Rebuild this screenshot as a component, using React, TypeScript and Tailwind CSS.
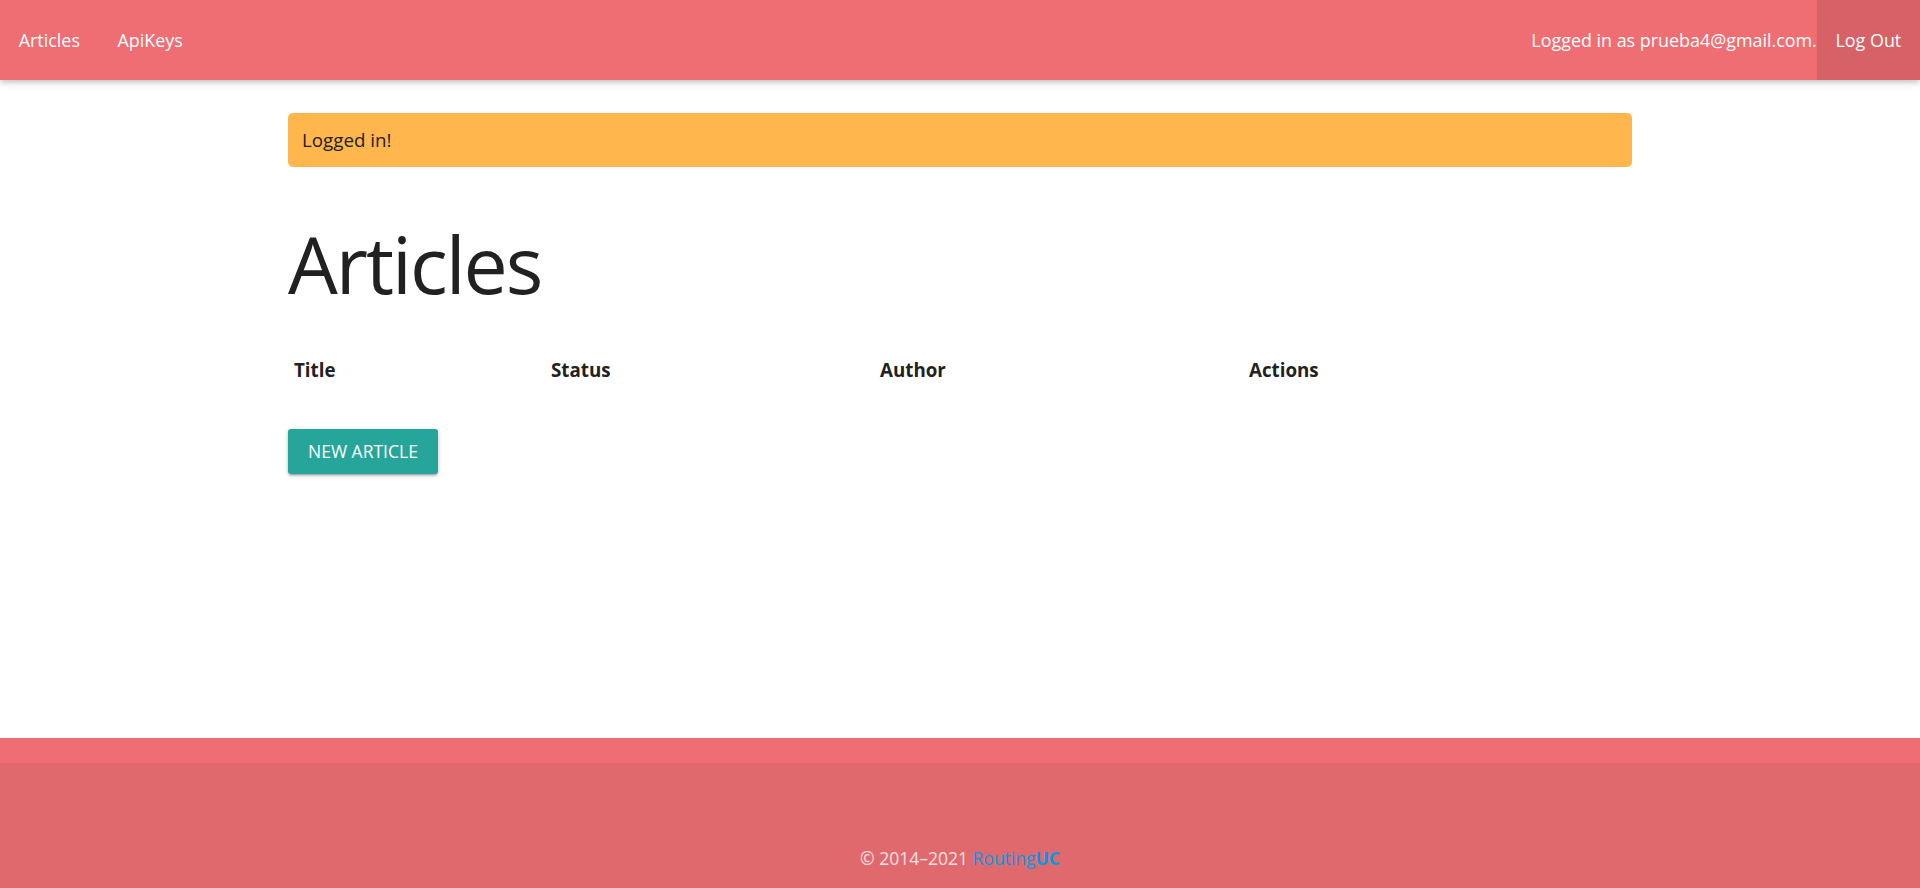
const columns = ["Title", "Status", "Author", "Actions"];

const Navbar = () => (
  <nav className="relative z-10 flex h-[80px] items-center justify-between bg-[#ef6e73] text-[17.9px] text-white shadow-[0_2px_5px_0_rgba(0,0,0,0.16),0_2px_10px_0_rgba(0,0,0,0.12)]">
    <ul className="flex h-full items-center">
      <li>
        <a className="px-[18.75px]" href="#">
          Articles
        </a>
      </li>
      <li>
        <a className="px-[18.75px]" href="#">
          ApiKeys
        </a>
      </li>
    </ul>
    <ul className="flex h-full items-center">
      <li>Logged in as prueba4@gmail.com.</li>
      <li className="h-full">
        <a
          className="flex h-full items-center bg-black/10 px-[18.75px]"
          href="#"
        >
          Log Out
        </a>
      </li>
    </ul>
  </nav>
);

const Footer = () => (
  <footer className="mt-auto bg-[#ef6e73] pt-[25px]">
    <div className="flex h-[125px] items-start justify-center bg-[rgba(51,51,51,0.08)] pt-[82px] text-[17.5px] text-white/80">
      <span>
        © 2014–2021{" "}
        <a className="text-[#039be5]" href="#">
          Routing<b>UC</b>
        </a>
      </span>
    </div>
  </footer>
);

export default function App() {
  return (
    <div className="flex min-h-[888px] flex-col bg-white font-['Open_Sans',sans-serif] text-[#212121]">
      <Navbar />
      <main className="mx-auto w-[1344px] pt-[33px]">
        <div className="flex h-[54px] items-center rounded-[5px] bg-[#ffb74d] px-[14px] text-[18.75px]">
          Logged in!
        </div>
        <h1 className="mt-[54px] text-[78.75px] leading-[1.1] font-normal tracking-[-2px]">
          Articles
        </h1>
        <div className="mt-[30px] grid grid-cols-[257px_329px_369px_1fr] text-[18.75px] font-bold">
          {columns.map((col) => (
            <div key={col} className="px-[6px] py-[18px]">
              {col}
            </div>
          ))}
        </div>
        <button className="mt-[27px] h-[45px] rounded-[3px] bg-[#26a69a] px-[20px] text-[17.5px] text-white uppercase shadow-[0_2px_2px_0_rgba(0,0,0,0.14),0_3px_1px_-2px_rgba(0,0,0,0.12),0_1px_5px_0_rgba(0,0,0,0.2)]">
          New Article
        </button>
      </main>
      <Footer />
    </div>
  );
}
